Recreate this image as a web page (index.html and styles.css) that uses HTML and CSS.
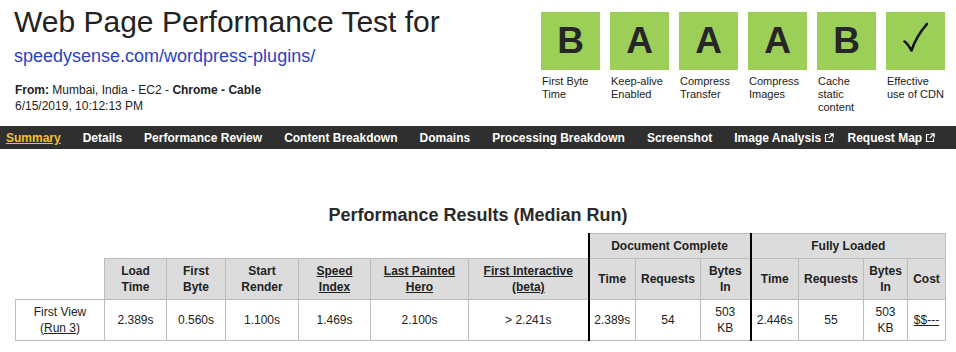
FILE: index.html
```html
<!DOCTYPE html>
<html lang="en">
  <head>
    <meta charset="UTF-8" />
    <meta name="viewport" content="width=device-width, initial-scale=1.0" />
    <title>WebPageTest Test Result</title>
    <link rel="stylesheet" href="styles.css">
  </head>
  <body>
    <header class="test-header">
      <div class="test-info">
        <h1>Web Page Performance Test for</h1>
        <a class="test-url" href="#">speedysense.com/wordpress-plugins/</a>
        <p class="test-meta">
          <strong>From:</strong> Mumbai, India - EC2 - <strong>Chrome - Cable</strong><br />
          6/15/2019, 10:12:13 PM
        </p>
      </div>
      <ul class="grades">
        <li><div class="grade">B</div><span>First Byte Time</span></li>
        <li><div class="grade">A</div><span>Keep-alive Enabled</span></li>
        <li><div class="grade">A</div><span>Compress Transfer</span></li>
        <li><div class="grade">A</div><span>Compress Images</span></li>
        <li><div class="grade">B</div><span>Cache static content</span></li>
        <li>
          <div class="grade check">
            <svg viewBox="0 0 59 58" width="59" height="58"><path d="M18.5 29.5c2.5 1.5 4.5 4.5 7 9c3-9 8-18 15.5-26.5" /></svg>
          </div>
          <span>Effective use of CDN</span>
        </li>
      </ul>
    </header>

    <nav class="result-nav">
      <a href="#" class="current">Summary</a>
      <a href="#">Details</a>
      <a href="#">Performance Review</a>
      <a href="#">Content Breakdown</a>
      <a href="#">Domains</a>
      <a href="#">Processing Breakdown</a>
      <a href="#">Screenshot</a>
      <a href="#" class="external">Image Analysis
        <svg class="ext" viewBox="0 0 10 10" width="10" height="10"><path d="M4.5 1.5H1.5v7h7V5.5" /><path d="M5.5 0.8h3.7v3.7M9.2 0.8L4.6 5.4" /></svg></a>
      <a href="#" class="external">Request Map
        <svg class="ext" viewBox="0 0 10 10" width="10" height="10"><path d="M4.5 1.5H1.5v7h7V5.5" /><path d="M5.5 0.8h3.7v3.7M9.2 0.8L4.6 5.4" /></svg></a>
    </nav>

    <main>
      <h2 class="results-title">Performance Results (Median Run)</h2>
      <table class="results">
        <colgroup>
          <col style="width: 89px" /><col style="width: 62px" /><col style="width: 59px" />
          <col style="width: 73px" /><col style="width: 72px" /><col style="width: 98px" />
          <col style="width: 120px" /><col style="width: 47px" /><col style="width: 65px" />
          <col style="width: 50px" /><col style="width: 48px" /><col style="width: 65px" />
          <col style="width: 44px" /><col style="width: 38px" />
        </colgroup>
        <thead>
          <tr>
            <th colspan="7" class="blank"></th>
            <th colspan="3" class="split">Document Complete</th>
            <th colspan="4" class="split">Fully Loaded</th>
          </tr>
          <tr>
            <th class="blank"></th>
            <th>Load Time</th>
            <th>First Byte</th>
            <th>Start Render</th>
            <th><a href="#">Speed Index</a></th>
            <th><a href="#">Last Painted Hero</a></th>
            <th><a href="#">First Interactive (beta)</a></th>
            <th class="split">Time</th>
            <th>Requests</th>
            <th>Bytes In</th>
            <th class="split">Time</th>
            <th>Requests</th>
            <th>Bytes In</th>
            <th>Cost</th>
          </tr>
        </thead>
        <tbody>
          <tr>
            <td>First View<br />(<a href="#">Run 3</a>)</td>
            <td>2.389s</td>
            <td>0.560s</td>
            <td>1.100s</td>
            <td>1.469s</td>
            <td>2.100s</td>
            <td>&gt; 2.241s</td>
            <td class="split">2.389s</td>
            <td>54</td>
            <td>503<br />KB</td>
            <td class="split">2.446s</td>
            <td>55</td>
            <td>503<br />KB</td>
            <td><a href="#">$$---</a></td>
          </tr>
        </tbody>
      </table>
    </main>
  </body>
</html>
```

FILE: styles.css
```css
body {
  margin: 0;
  font-family: "Liberation Sans", Arial, sans-serif;
  color: #222;
  background-color: #fff;
}
.test-header {
  display: flex;
  justify-content: space-between;
  padding: 0 11px 0 14px;
  height: 126px;
}
.test-info h1 {
  margin: 5px 0 0;
  font-size: 30px;
  line-height: 34px;
  font-weight: normal;
  color: #222;
}
.test-url {
  display: block;
  margin-top: 6px;
  font-size: 18px;
  line-height: 22px;
  color: #2b3fc6;
  text-decoration: none;
}
.test-meta {
  margin: 15px 0 0 1px;
  font-size: 12px;
  line-height: 16px;
}
.grades {
  display: flex;
  gap: 10px;
  list-style: none;
  margin: 12px 0 0;
  padding: 0;
}
.grades li {
  width: 59px;
  font-size: 11px;
  line-height: 13px;
}
.grades span {
  display: block;
  margin-top: 5px;
  padding-left: 1px;
}
.grade {
  height: 58px;
  background-color: #9ccf58;
  color: #262626;
  font-size: 37px;
  font-weight: bold;
  line-height: 58px;
  text-align: center;
}
.grade.check svg {
  display: block;
  fill: none;
  stroke: #111;
  stroke-width: 2.6;
  stroke-linecap: round;
  stroke-linejoin: round;
}
.result-nav {
  display: flex;
  gap: 22px;
  height: 23px;
  padding-left: 6px;
  background-color: #2f2f2f;
  font-size: 12px;
  font-weight: bold;
  line-height: 24px;
}
.result-nav a {
  color: #fff;
  text-decoration: none;
  white-space: nowrap;
}
.result-nav a.current {
  color: #f2c12e;
  text-decoration: underline;
}
.result-nav a.external {
  margin-right: -8px;
}
.result-nav .ext {
  margin-left: -1px;
  vertical-align: -1px;
  fill: none;
  stroke: #fff;
  stroke-width: 1.2;
}
.results-title {
  margin: 55px 0 0;
  font-size: 18px;
  line-height: 22px;
  text-align: center;
  color: #2a2a2a;
}
.results {
  table-layout: fixed;
  width: 930px;
  margin: 7px 0 0 15px;
  border-collapse: collapse;
  font-size: 12px;
  line-height: 16px;
}
.results th,
.results td {
  padding: 4px 3px;
  border: 1px solid #bdbdbd;
  text-align: center;
}
.results th {
  background-color: #dcdcdc;
  font-weight: bold;
}
.results th.blank {
  background-color: #fff;
  border: none;
}
.results .split {
  border-left: 2px solid #000;
}
.results a {
  color: #222;
  text-decoration: underline;
}
```
